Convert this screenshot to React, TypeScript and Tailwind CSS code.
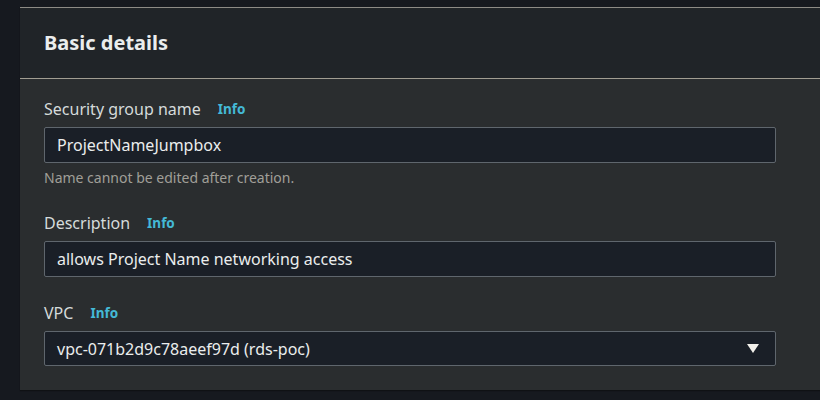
export default function App() {
  const fields = [
    { label: 'Security group name', value: 'ProjectNameJumpbox', hint: 'Name cannot be edited after creation.' },
    { label: 'Description', value: 'allows Project Name networking access' },
  ]

  return (
    <div className="w-[820px] h-[400px] overflow-hidden bg-[#16191f] pt-[7px] pl-5" style={{ fontFamily: '"Noto Sans", "Open Sans", sans-serif' }}>
      <div className="w-[820px] h-[383px] border-t border-[#8d8b86] shadow-[0_1px_1px_#0f1114]">
        <div className="h-[71px] bg-[#202428] border-b border-[#a19d92] px-6 flex items-center">
          <h2 className="text-[20px] font-bold text-[#eaeded] leading-none">Basic details</h2>
        </div>
        <div className="bg-[#2a2d2f] h-[311px] px-6 pt-[18px] flex flex-col gap-[23px]">
          {fields.map((f) => (
            <div key={f.label}>
              <div className="flex items-center gap-[17px] text-[#d5dbdb] text-[16px] leading-[24px] mb-[6px]">
                <span>{f.label}</span>
                <span className="text-[#44b9d6] font-bold text-[13.5px]">Info</span>
              </div>
              <div className="w-[732px] h-[36px] bg-[#1a1f27] border border-[#5f666d] rounded-[2px] flex items-center px-3 text-[16px] text-[#eaeded]">
                {f.value}
              </div>
              {f.hint && <div className="text-[14px] text-[#a09f98] mt-[5px] leading-[20px]">{f.hint}</div>}
            </div>
          ))}
          <div className="mt-px">
            <div className="flex items-center gap-[17px] text-[#d5dbdb] text-[16px] leading-[24px] mb-[6px]">
              <span>VPC</span>
              <span className="text-[#44b9d6] font-bold text-[13.5px]">Info</span>
            </div>
            <div className="w-[732px] h-[35px] bg-[#1a1f27] border border-[#5f666d] rounded-[2px] flex items-center justify-between pl-3 pr-4 text-[16px] text-[#eaeded]">
              <span>vpc-071b2d9c78aeef97d (rds-poc)</span>
              <svg width="12" height="9" viewBox="0 0 12 9" className="fill-[#f2f0eb]">
                <path d="M0 0h12L6 9z" />
              </svg>
            </div>
          </div>
        </div>
      </div>
    </div>
  )
}
